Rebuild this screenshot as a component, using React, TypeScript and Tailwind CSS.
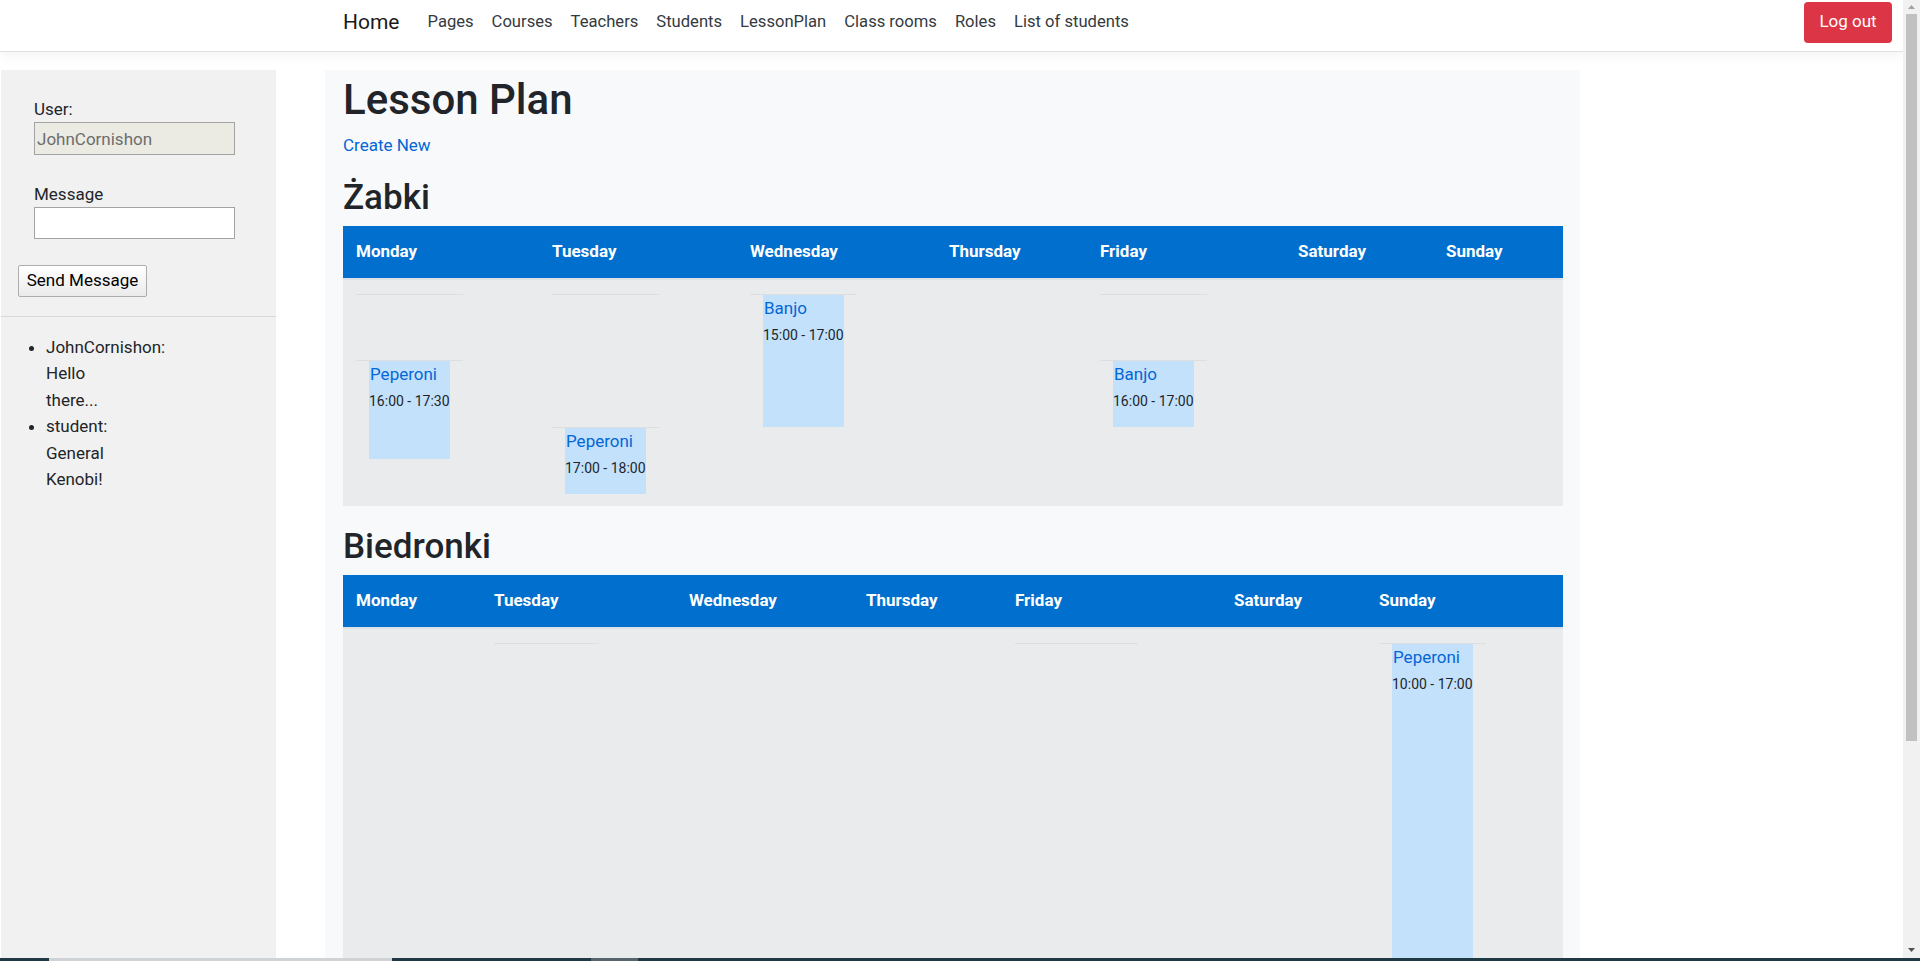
import React from 'react';

type Slot =
  | { kind: 'empty'; h: string }
  | { kind: 'lesson'; h: string; name: string; time: string };

type Day = { name: string; col: string; inner?: string; slots?: Slot[] };

const NAV = ['Pages', 'Courses', 'Teachers', 'Students', 'LessonPlan', 'Class rooms', 'Roles', 'List of students'];

const ZABKI: Day[] = [
  {
    name: 'Monday',
    col: 'w-[196px]',
    inner: 'w-[107px]',
    slots: [
      { kind: 'empty', h: 'h-[66px]' },
      { kind: 'lesson', h: 'h-[98px]', name: 'Peperoni', time: '16:00 - 17:30' },
    ],
  },
  {
    name: 'Tuesday',
    col: 'w-[198px]',
    inner: 'w-[107px]',
    slots: [
      { kind: 'empty', h: 'h-[133px]' },
      { kind: 'lesson', h: 'h-[66px]', name: 'Peperoni', time: '17:00 - 18:00' },
    ],
  },
  {
    name: 'Wednesday',
    col: 'w-[199px]',
    inner: 'w-[107px]',
    slots: [{ kind: 'lesson', h: 'h-[132px]', name: 'Banjo', time: '15:00 - 17:00' }],
  },
  { name: 'Thursday', col: 'w-[151px]' },
  {
    name: 'Friday',
    col: 'w-[198px]',
    inner: 'w-[107px]',
    slots: [
      { kind: 'empty', h: 'h-[66px]' },
      { kind: 'lesson', h: 'h-[66px]', name: 'Banjo', time: '16:00 - 17:00' },
    ],
  },
  { name: 'Saturday', col: 'w-[148px]' },
  { name: 'Sunday', col: 'w-[130px]' },
];

const BIEDRONKI: Day[] = [
  { name: 'Monday', col: 'w-[138px]' },
  { name: 'Tuesday', col: 'w-[195px]', inner: 'w-[105px]', slots: [{ kind: 'empty', h: 'h-0' }] },
  { name: 'Wednesday', col: 'w-[177px]' },
  { name: 'Thursday', col: 'w-[149px]' },
  { name: 'Friday', col: 'w-[219px]', inner: 'w-[123px]', slots: [{ kind: 'empty', h: 'h-0' }] },
  { name: 'Saturday', col: 'w-[145px]' },
  {
    name: 'Sunday',
    col: 'w-[197px]',
    inner: 'w-[107px]',
    slots: [{ kind: 'lesson', h: 'h-[462px]', name: 'Peperoni', time: '10:00 - 17:00' }],
  },
];

function DayCell({ day }: { day: Day }) {
  if (!day.slots) return <td className="px-[13px] pt-[14px] pb-[12px] align-top" />;
  return (
    <td className="px-[13px] pt-[14px] pb-[12px] align-top">
      <div className={day.inner}>
        {day.slots.map((s, i) =>
          s.kind === 'empty' ? (
            <div key={i} className={`border-t border-[#dcdee1] ${s.h}`} />
          ) : (
            <div key={i} className="border-t border-[#dcdee1] px-[13px]">
              <div className={`w-[81px] bg-[#c4e1fc] ${s.h}`}>
                <a className="block pl-px text-[17px] leading-[26px] text-[#0366d6]">{s.name}</a>
                <div className="whitespace-nowrap text-[14px] leading-[28px] text-[#212529]">{s.time}</div>
              </div>
            </div>
          ),
        )}
      </div>
    </td>
  );
}

function Plan({ days }: { days: Day[] }) {
  return (
    <table className="w-[1220px] table-fixed border-collapse">
      <colgroup>
        {days.map((d) => (
          <col key={d.name} className={d.col} />
        ))}
      </colgroup>
      <thead>
        <tr className="bg-[#006fcd]">
          {days.map((d) => (
            <th
              key={d.name}
              className="h-[53px] border-b-2 border-[#dee2e6] px-[13px] text-left align-middle text-[17px] font-bold text-white"
            >
              {d.name}
            </th>
          ))}
        </tr>
      </thead>
      <tbody>
        <tr className="bg-[#eaebed]">
          {days.map((d) => (
            <DayCell key={d.name} day={d} />
          ))}
        </tr>
      </tbody>
    </table>
  );
}

function Sidebar() {
  return (
    <aside className="ml-px w-[275px] shrink-0 bg-[#f1f1f1] text-[17px] text-[#212529]">
      <div className="pl-[33px] pt-[26px]">
        <div className="leading-[26px]">User:</div>
        <input
          disabled
          defaultValue="JohnCornishon"
          className="block h-[33px] w-[201px] border border-[#a3a3a3] bg-[#ebebe4] px-[2px] text-[17px] text-[#6d6d6d]"
        />
        <div className="mt-[26px] leading-[26px]">Message</div>
        <input className="block h-[32px] w-[201px] border border-[#a3a3a3] bg-white px-[2px] text-[17px]" />
      </div>
      <div className="pl-[17px] pt-[26px]">
        <button className="h-[32px] w-[129px] rounded-[2px] border border-[#adadad] bg-gradient-to-b from-white to-[#ebebeb] text-[17px] text-black">
          Send Message
        </button>
      </div>
      <div className="mt-[19px] border-t border-[#d9d9d9]" />
      <ul className="mt-[17px] list-disc pl-[45px] leading-[26.4px]">
        <li className="w-[80px]">JohnCornishon: Hello there...</li>
        <li className="w-[80px]">student: General Kenobi!</li>
      </ul>
    </aside>
  );
}

export default function App() {
  return (
    <div className="flex h-[961px] flex-col overflow-hidden bg-white font-['Roboto','Liberation_Sans',sans-serif]">
      <div className="flex min-h-0 flex-1">
        <div className="flex min-w-0 flex-1 flex-col overflow-hidden">
          <nav className="relative z-10 h-[52px] shrink-0 border-b border-[#dee2e6] bg-white shadow-[0_4px_12px_rgba(0,0,0,0.05)]">
            <div className="flex h-[44px] items-center pl-[343px] pr-[11px]">
              <span className="mr-[19px] mt-px text-[21px] text-[#1a1a1a]">Home</span>
              <ul className="mt-px flex">
                {NAV.map((n) => (
                  <li key={n} className="px-[9px] text-[16.6px] text-[#343a40]">
                    {n}
                  </li>
                ))}
              </ul>
              <button className="ml-auto h-[41px] w-[88px] rounded-[4px] bg-[#dc3545] text-[17px] text-white">
                Log out
              </button>
            </div>
          </nav>

          <div className="mt-[18px] flex min-h-0 flex-1">
            <Sidebar />
            <main className="ml-[49px] w-[1255px] shrink-0 overflow-hidden bg-[#f8f9fa] pl-[18px] pr-[17px] pt-[5px] text-[#212529]">
              <h1 className="mb-[7px] text-[42px] font-medium leading-[50px]">Lesson Plan</h1>
              <a className="block text-[17px] leading-[26px] text-[#0366d6]">Create New</a>
              <h2 className="mt-[19px] mb-[7px] text-[35px] font-medium leading-[42px]">Żabki</h2>
              <Plan days={ZABKI} />
              <h2 className="mt-[20px] mb-[7px] text-[35px] font-medium leading-[42px]">Biedronki</h2>
              <Plan days={BIEDRONKI} />
            </main>
          </div>
        </div>

        {/* window scrollbar */}
        <div className="flex w-[17px] shrink-0 flex-col bg-[#f1f1f1]">
          <div className="flex h-[14px] items-center justify-center">
            <svg width="7" height="4" viewBox="0 0 7 4">
              <path d="M0 4 L3.5 0 L7 4 Z" fill="#a3a3a3" />
            </svg>
          </div>
          <div className="mx-[3px] h-[727px] bg-[#c1c1c1]" />
          <div className="flex-1" />
          <div className="flex h-[17px] items-center justify-center">
            <svg width="7" height="4" viewBox="0 0 7 4">
              <path d="M0 0 L7 0 L3.5 4 Z" fill="#505050" />
            </svg>
          </div>
        </div>
      </div>

      {/* taskbar edge */}
      <div className="flex h-[3px] shrink-0 bg-[#1f3a44]">
        <div className="w-[49px]" />
        <div className="w-[343px] bg-[#cfd3d6]" />
        <div className="w-[199px]" />
        <div className="w-[47px] bg-[#56666c]" />
      </div>
    </div>
  );
}
